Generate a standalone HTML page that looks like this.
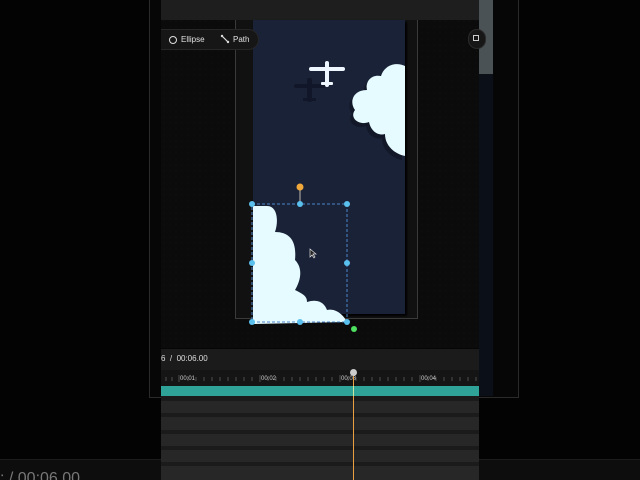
<!DOCTYPE html>
<html><head><meta charset="utf-8"><style>
*{margin:0;padding:0;box-sizing:border-box}
html,body{width:640px;height:480px;overflow:hidden}
body{background:#030303;position:relative;font-family:"Liberation Sans",sans-serif}
.a{position:absolute}
</style></head><body>
<div class="a" style="left:149px;top:0;width:370px;height:398px;border:1px solid #2a2a2a;border-top:none;background:#060606"></div>
<div class="a" style="left:161px;top:0;width:318px;height:348px;background:#0b0b0b;background-image:radial-gradient(#141414 0.6px,transparent 0.8px);background-size:6px 6px"></div>
<div class="a" style="left:161px;top:0;width:318px;height:20px;background:#1e1e1e"></div>
<div class="a" style="left:479px;top:0;width:14px;height:74px;background:#4a5256"></div>
<div class="a" style="left:479px;top:74px;width:14px;height:322px;background:#0b1018"></div>
<!-- canvas frame -->
<div class="a" style="left:235px;top:20px;width:183px;height:299px;border:1px solid #3a3a3a;border-top:none;background:#111"></div>
<div class="a" style="left:253px;top:20px;width:152px;height:294px;background:#1a2238;box-shadow:2px 2px 2px #000"></div>
<!-- toolbar pill -->
<div class="a" style="left:161px;top:29px;width:98px;height:21px;background:#161616;border:1px solid #262626;border-left:none;border-radius:0 11px 11px 0"></div>
<div class="a" style="left:169px;top:36px;width:8px;height:8px;border:1.2px solid #ddd;border-radius:50%"></div>
<div class="a" style="left:181px;top:35px;font-size:8px;color:#e0e0e0">Ellipse</div>
<svg class="a" style="left:220px;top:34px" width="10" height="10"><path d="M2 2 L5 5 L8 8" stroke="#ddd" stroke-width="1.2" fill="none"/><circle cx="2" cy="2" r="1.2" fill="#ddd"/><circle cx="8" cy="8" r="1.2" fill="#ddd"/></svg>
<div class="a" style="left:233px;top:35px;font-size:8px;color:#e0e0e0">Path</div>
<div class="a" style="left:468px;top:29px;width:18px;height:20px;border-radius:10px;background:#171717;border:1px solid #2a2a2a"></div>
<div class="a" style="left:473px;top:35px;width:6px;height:6px;border:1px solid #ccc"></div>
<!-- plane -->
<svg class="a" style="left:290px;top:58px" width="60" height="45">
<g fill="#0c1020" opacity="0.6" transform="translate(-16,12)"><rect x="20" y="14" width="32" height="4" rx="2"/><rect x="33" y="8" width="5" height="24" rx="2"/><rect x="29" y="28" width="13" height="3"/></g>
<g fill="#eef6ff"><rect x="19" y="9" width="36" height="4" rx="2"/><rect x="35" y="3" width="4" height="26" rx="2"/><rect x="31" y="24" width="12" height="3" rx="1"/></g>
</svg>
<!-- top-right cloud -->
<svg class="a" style="left:345px;top:62px" width="62" height="100">
<path d="M60 4 C52 0 40 2 36 14 C26 12 20 20 22 28 C8 28 4 40 10 48 C4 56 14 64 24 60 C26 70 34 74 40 72 C40 84 50 92 60 94 Z" fill="#0a0e18" opacity="0.5" transform="translate(-3,4)"/>
<path d="M60 4 C52 0 40 2 36 14 C26 12 20 20 22 28 C8 28 4 40 10 48 C4 56 14 64 24 60 C26 70 34 74 40 72 C40 84 50 92 60 94 Z" fill="#e6fbff"/>
</svg>
<!-- selected cloud -->
<svg class="a" style="left:245px;top:180px" width="120" height="160">
<path d="M8 26 L22 26 C32 26 34 40 30 52 C44 52 52 60 50 80 C58 88 56 100 50 110 C58 114 62 116 62 122 C74 118 80 124 82 130 C90 128 98 134 102 142 L8 144 Z" fill="#e6fbff"/>
<g stroke="#4c84c8" stroke-width="1" stroke-dasharray="3 2" fill="none"><rect x="7" y="24" width="95" height="118"/></g>
<line x1="55" y1="8" x2="55" y2="24" stroke="#888" stroke-width="1.5"/>
<circle cx="55" cy="7" r="3.5" fill="#f0a83a"/>
<g fill="#5ac0ee"><circle cx="7" cy="24" r="3"/><circle cx="55" cy="24" r="3"/><circle cx="102" cy="24" r="3"/><circle cx="7" cy="83" r="3"/><circle cx="102" cy="83" r="3"/><circle cx="7" cy="142" r="3"/><circle cx="55" cy="142" r="3"/><circle cx="102" cy="142" r="3"/></g>
<circle cx="109" cy="149" r="3" fill="#4ee060"/>
</svg>
<svg class="a" style="left:309px;top:248px" width="8" height="11"><path d="M1 1 L1 9 L3 7 L5 10 L6 9 L4 6 L7 6 Z" fill="#222" stroke="#ddd" stroke-width="0.7"/></svg>
<!-- bottom strip -->
<div class="a" style="left:0;top:459px;width:640px;height:21px;background:#0d0d0d;border-top:1px solid #1c1c1c;overflow:hidden">
<div style="position:absolute;left:0;top:10px;font-size:16px;line-height:18px;color:#777;white-space:nowrap">: / 00:06.00</div></div>
<!-- timeline -->
<div class="a" style="left:161px;top:349px;width:318px;height:131px;background:#1b1b1b"></div>
<div class="a" style="left:161px;top:354px;font-size:8px;color:#ddd;white-space:nowrap">6 &nbsp;/ &nbsp;00:06.00</div>
<div class="a" style="left:161px;top:370px;width:318px;height:16px;background:#151515"></div>
<svg class="a" style="left:161px;top:370px" width="318" height="16">
<g stroke="#666" stroke-width="0.7">
<path d="M5 7v4M11 7v4M18 5v7M27 7v4M35 7v4M43 7v4M51 7v4M59 7v4M67 7v4M75 7v4M83 7v4M91 7v4M99 5v7M107 7v4M115 7v4M123 7v4M131 7v4M139 7v4M147 7v4M155 7v4M163 7v4M171 7v4M179 5v7M187 7v4M195 7v4M203 7v4M211 7v4M219 7v4M227 7v4M235 7v4M243 7v4M251 7v4M259 5v7M267 7v4M275 7v4M283 7v4M291 7v4M299 7v4M307 7v4M315 7v4"/></g>
<g fill="#ccc" font-size="6" font-family="Liberation Sans"><text x="19" y="10">00:01</text><text x="100" y="10">00:02</text><text x="180" y="10">00:03</text><text x="260" y="10">00:04</text></g>
</svg>
<div class="a" style="left:161px;top:386px;width:318px;height:10px;background:#2fa398"></div>
<div class="a" style="left:161px;top:401px;width:318px;height:12px;background:#272727"></div>
<div class="a" style="left:161px;top:417px;width:318px;height:13px;background:#272727"></div>
<div class="a" style="left:161px;top:434px;width:318px;height:12px;background:#272727"></div>
<div class="a" style="left:161px;top:450px;width:318px;height:12px;background:#272727"></div>
<div class="a" style="left:161px;top:466px;width:318px;height:14px;background:#272727"></div>
<div class="a" style="left:352.5px;top:374px;width:1.5px;height:106px;background:#e8a040"></div>
<div class="a" style="left:352.5px;top:386px;width:1.5px;height:10px;background:#cfe8a0"></div>
<div class="a" style="left:350px;top:369px;width:7px;height:7px;border-radius:50%;background:#ccc"></div>
</body></html>
